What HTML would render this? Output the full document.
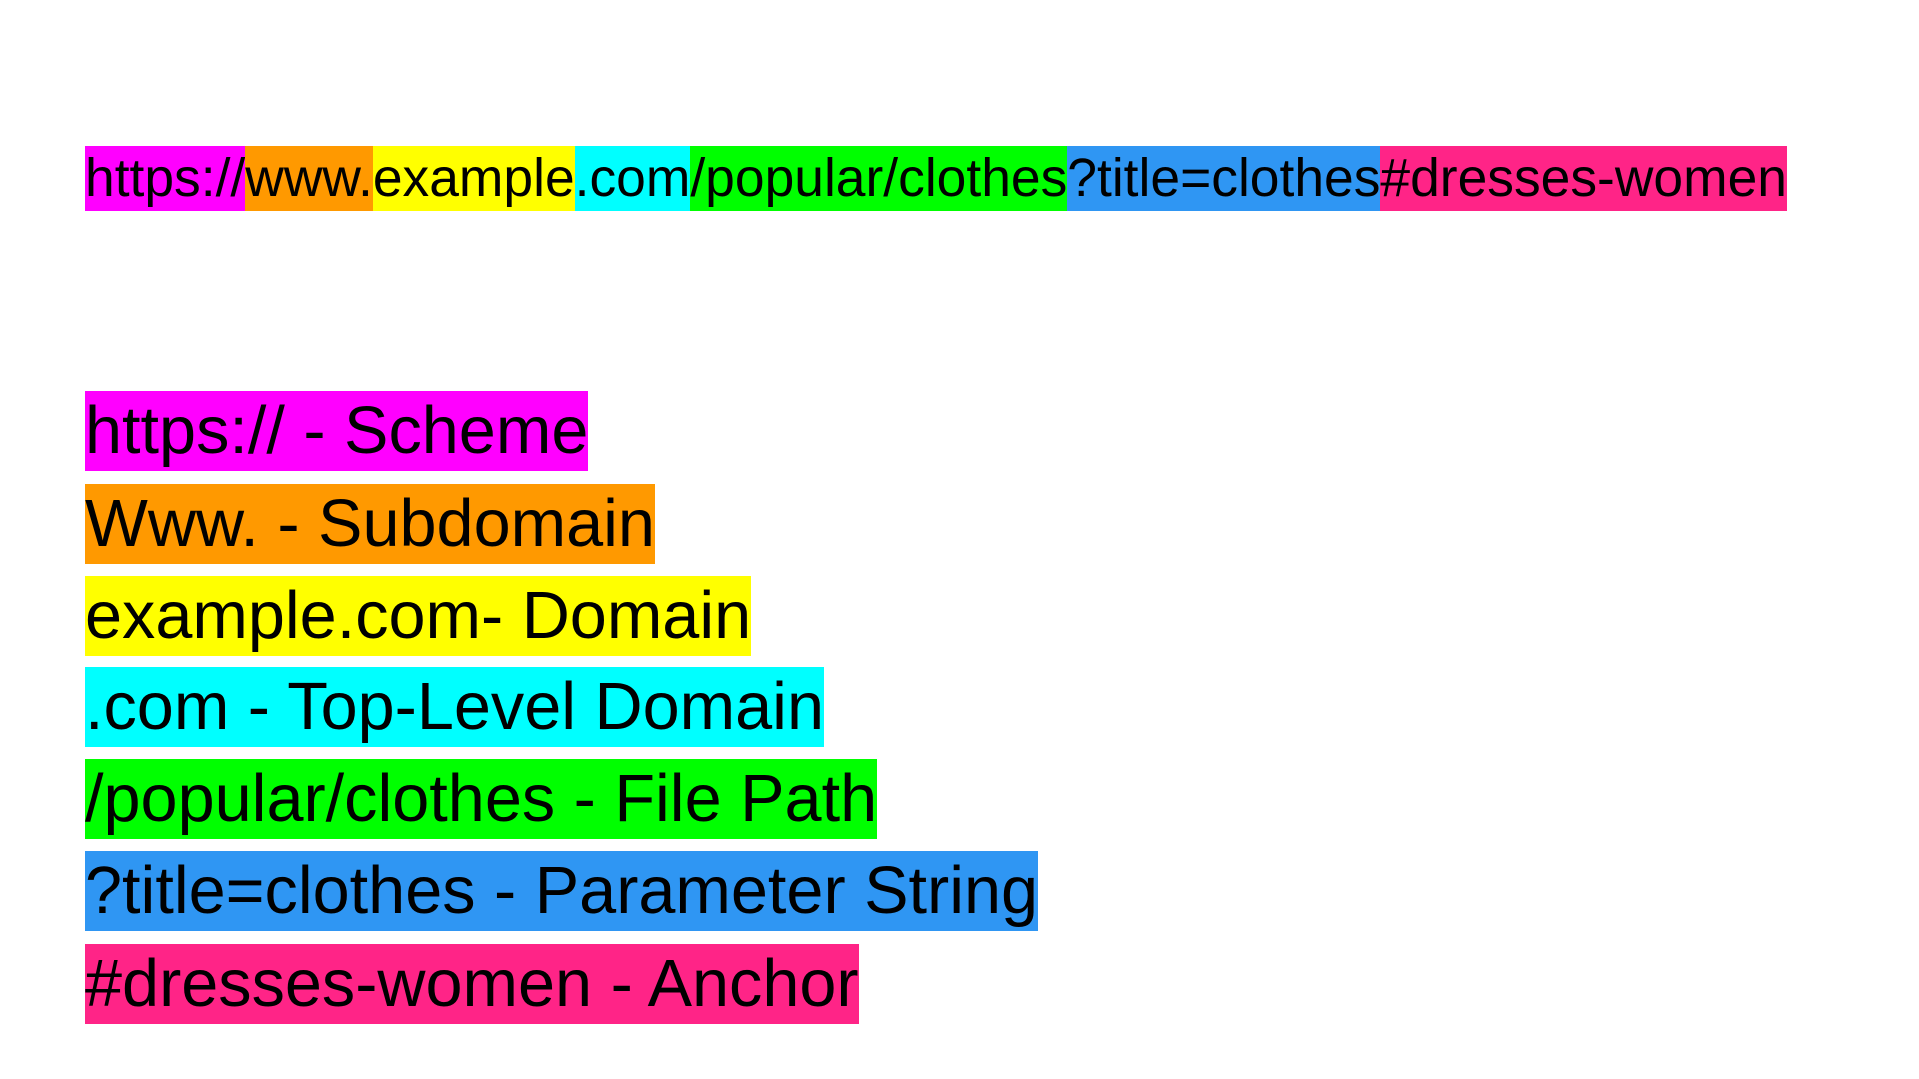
<!DOCTYPE html>
<html><head><meta charset="utf-8"><style>
html,body{margin:0;padding:0;background:#fff;width:1919px;height:1079px;overflow:hidden;font-family:"Liberation Sans",Arial,sans-serif;color:#000}
.top{position:absolute;left:85px;top:146px;height:65px;font-size:53.4px;line-height:65px;white-space:nowrap;display:flex}
.top span{display:block;height:65px}
.row{position:absolute;left:85px;height:80px;font-size:66.6px;line-height:80px;white-space:nowrap;display:inline-block}
.m{background:#ff00ff}.o{background:#ff9900}.y{background:#ffff00}.c{background:#00ffff}.g{background:#00ff00}.b{background:#2f96f3}.p{background:#ff2487}
</style></head><body>
<div class="top"><span class="m">https://</span><span class="o">www.</span><span class="y">example</span><span class="c">.com</span><span class="g">/popular/clothes</span><span class="b">?title=clothes</span><span class="p">#dresses-women</span></div>
<div class="row m" style="top:391px">https:// - Scheme</div>
<div class="row o" style="top:484px">Www. - Subdomain</div>
<div class="row y" style="top:576px">example.com- Domain</div>
<div class="row c" style="top:667px">.com - Top-Level Domain</div>
<div class="row g" style="top:759px">/popular/clothes - File Path</div>
<div class="row b" style="top:851px">?title=clothes - Parameter String</div>
<div class="row p" style="top:944px">#dresses-women - Anchor</div>
</body></html>
